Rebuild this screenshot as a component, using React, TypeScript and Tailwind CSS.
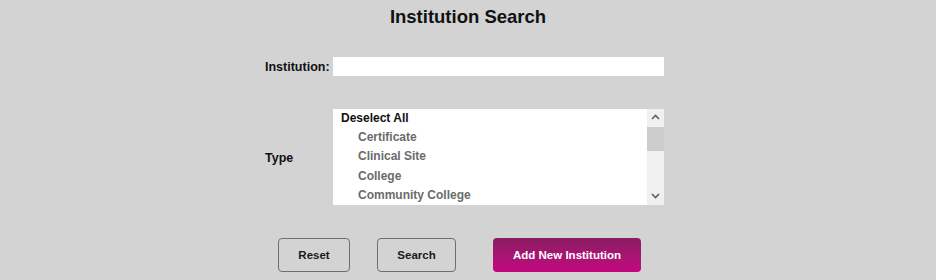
const types = ["Certificate", "Clinical Site", "College", "Community College"];

function ScrollBar() {
  return (
    <div className="flex w-[17px] flex-col bg-[#f0f0f0]">
      <div className="flex h-[17px] items-center justify-center">
        <svg width="9" height="6" viewBox="0 0 9 6">
          <path d="M1 5 L4.5 1.5 L8 5" fill="none" stroke="#606060" strokeWidth="1.6" />
        </svg>
      </div>
      <div className="mt-[1px] h-[24px] bg-[#cdcdcd]" />
      <div className="flex-1" />
      <div className="flex h-[17px] items-center justify-center">
        <svg width="9" height="6" viewBox="0 0 9 6">
          <path d="M1 1 L4.5 4.5 L8 1" fill="none" stroke="#606060" strokeWidth="1.6" />
        </svg>
      </div>
    </div>
  );
}

export default function App() {
  return (
    <div className="h-[280px] w-[936px] bg-[#d3d3d3] font-['Liberation_Sans',Arial,sans-serif] text-[#111]">
      <h1 className="pt-[6px] text-center text-[18.5px] font-bold leading-[22px]">
        Institution Search
      </h1>

      <div className="ml-[265px] mt-[29px] w-[399px]">
        <div className="flex items-center">
          <label className="w-[68px] pt-[1px] text-[12.5px] font-bold">Institution:</label>
          <input className="h-[19px] w-[331px] bg-white px-1 text-[12px] outline-none" />
        </div>

        <div className="mt-[32px] flex items-center">
          <label className="w-[68px] pt-[4px] text-[12.5px] font-bold">Type</label>
          <div className="flex h-[96px] w-[331px] bg-white">
            <div className="flex-1 overflow-hidden text-[12px] font-bold leading-[19.3px]">
              <div className="pl-[8px] text-[#111]">Deselect All</div>
              {types.map((t) => (
                <div key={t} className="pl-[25px] text-[#6b6b6b]">
                  {t}
                </div>
              ))}
            </div>
            <ScrollBar />
          </div>
        </div>
      </div>

      <div className="mt-[33px] flex text-[11.5px] font-bold">
        <button className="ml-[278px] h-[34px] w-[72px] rounded-[4px] border border-[#6e6e6e] pt-[1px] text-[#1a1a1a]">
          Reset
        </button>
        <button className="ml-[27px] h-[34px] w-[79px] rounded-[4px] border border-[#6e6e6e] pt-[1px] text-[#1a1a1a]">
          Search
        </button>
        <button className="ml-[37px] h-[34px] w-[148px] rounded-[4px] bg-gradient-to-b from-[#8a1b63] to-[#c3047f] pt-[1px] text-white">
          Add New Institution
        </button>
      </div>
    </div>
  );
}
